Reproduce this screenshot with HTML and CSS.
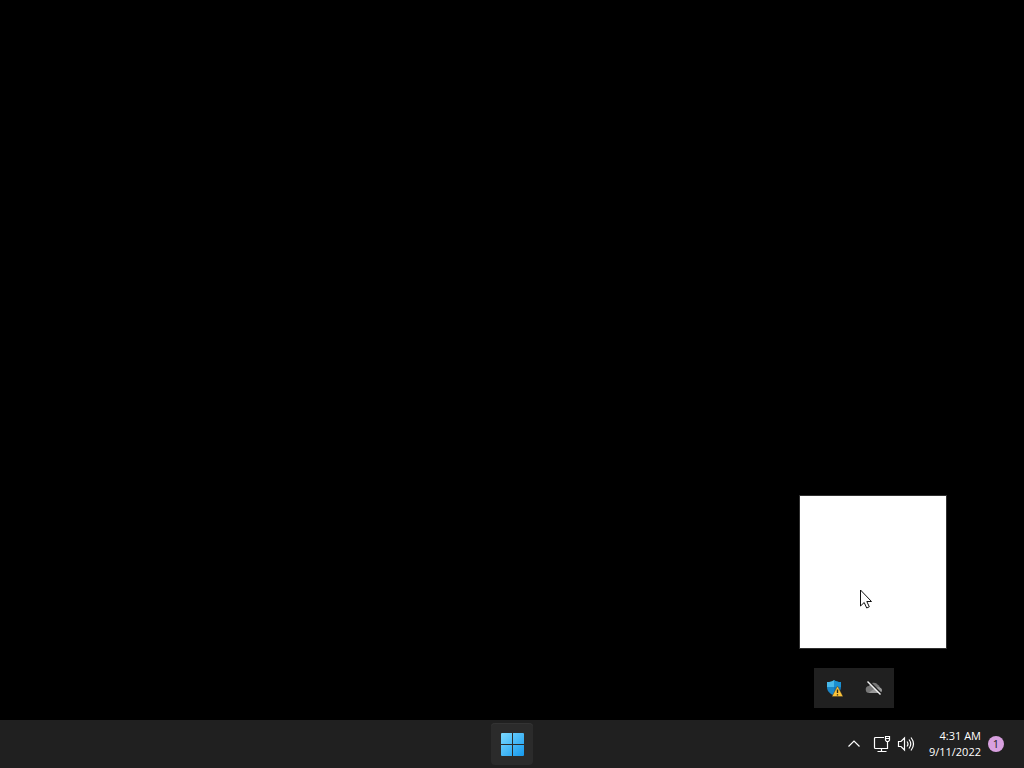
FILE: index.html
```
<!DOCTYPE html>
<html lang="en">

<head>
    <meta charset="UTF-8">
    <meta name="viewport" content="width=device-width, initial-scale=1.0">
    <title>Desktop</title>
    <link rel="stylesheet" href="styles.css">
</head>

<body>
    <main class="desktop">
        <section class="window" aria-label="Window"></section>
        <div class="tray-flyout">
            <button class="flyout-button" aria-label="Windows Security">
                <svg width="18" height="18" viewBox="0 0 18 18">
                    <path d="M9 1c2 1.500 4 2 7 2v5c0 4-2.500 6.500-7 8.500z" fill="#1477b8" />
                    <path d="M9 1C7 2.500 5 3 2 3v5h7z" fill="#48b9ea" />
                    <path d="M9 1c2 1.500 4 2 7 2v5H9z" fill="#1b8fd0" />
                    <path d="M2 8h7v8.500C4.500 14.500 2 12 2 8z" fill="#1b86c7" />
                    <path d="M12.500 7L18 17.500H7z" fill="#fcc43a" stroke="#3a3020" stroke-width=".4" />
                    <path d="M12.500 10.500v3.600M12.500 15.200v1.200" stroke="#2b2412" stroke-width="1.400" />
                </svg>
            </button>
            <button class="flyout-button" aria-label="OneDrive, not signed in">
                <svg width="18" height="18" viewBox="0 0 18 18">
                    <path d="M4.500 14a3.500 3.500 0 0 1-.5-7 5 5 0 0 1 8.500-1.500 4.500 4.500 0 0 1 2.500 3.200 2.800 2.800 0 0 1-.5 5.300z" fill="#777" />
                    <path d="M4 14c2-2.500 5-4 8-5.500 3-1 5 1 5 3a2.700 2.700 0 0 1-2.500 2.500z" fill="#999" />
                    <path d="M4 2.500l12 12" stroke="#202020" stroke-width="2" />
                    <path d="M2.500 2.500l13 13" stroke="#f2f2f2" stroke-width="1.400" />
                </svg>
            </button>
        </div>
        <svg class="cursor" width="14" height="21" viewBox="0 0 14 21">
            <path d="M1.500 1v16l3.700-3.500L7.700 19l2.600-1.200-2.500-5.300h4.700z" fill="#fff" stroke="#111" />
        </svg>
    </main>

    <footer class="taskbar">
        <button class="start-button" aria-label="Start">
            <svg width="24" height="24" viewBox="0 0 24 24">
                <defs>
                    <linearGradient id="startBlue" gradientUnits="userSpaceOnUse" x1="0" y1="0" x2="24" y2="24">
                        <stop offset="0" stop-color="#80dcff" />
                        <stop offset="1" stop-color="#1599ee" />
                    </linearGradient>
                </defs>
                <path d="M2 1h10v11H1V2a1 1 0 0 1 1-1zM13 1h10a1 1 0 0 1 1 1v10H13zM1 13h11v11H2a1 1 0 0 1-1-1zM13 13h11v10a1 1 0 0 1-1 1H13z" fill="url(#startBlue)" />
            </svg>
        </button>
        <div class="tray">
            <button class="tray-button" aria-label="Show hidden icons">
                <svg width="14" height="18" viewBox="0 0 14 18">
                    <path d="M1.500 11.500L7 6l5.500 5.500" />
                </svg>
            </button>
            <button class="tray-button quick-settings" aria-label="Network and volume">
                <svg width="18" height="18" viewBox="0 0 18 18">
                    <path d="M11 2.500H2.500a1 1 0 0 0-1 1v9a1 1 0 0 0 1 1h12v-7M8.500 13.500v3M4.500 16.500h9M12.500 1.500h4v3.500l-1 1.500h-2l-1-1.500zM12.500 3.500h4" />
                </svg>
                <svg width="18" height="18" viewBox="0 0 18 18">
                    <path d="M1.500 6.500H4L7.500 3v12L4 11.500H1.500zM10 6.500q2 2.500 0 5M12 4.500q3.500 4.500 0 9M14 2.500q5 6.500 0 13" />
                </svg>
            </button>
            <button class="tray-button clock">
                <span class="date-time">
                    <time>4:31 AM</time>
                    <time datetime="2022-09-11">9/11/2022</time>
                </span>
                <span class="badge">1</span>
            </button>
        </div>
    </footer>
</body>

</html>
```
FILE: styles.css
```
body {
    margin: 0;
    min-height: 100vh;
    display: flex;
    flex-direction: column;
    background-color: #000;
    font-family: "Open Sans", "Noto Sans", sans-serif;
    font-size: 11px;
    font-weight: 500;
    line-height: 16px;
    color: #fff;
}

button {
    margin: 0;
    padding: 0;
    border: none;
    background: none;
    font: inherit;
    color: inherit;
}

svg {
    display: block;
    fill: none;
}

.desktop {
    flex: 1;
    position: relative;
    overflow: hidden;
}

/* floats over the desktop */
.window {
    position: absolute;
    right: 77px;
    bottom: 71px;
    width: 146px;
    height: 152px;
    background-color: #fff;
    border: 1px solid #303030;
}

.tray-flyout {
    position: absolute;
    right: 130px;
    bottom: 12px;
    display: flex;
    background-color: #202020;
}

.flyout-button {
    width: 40px;
    height: 40px;
    display: flex;
    justify-content: center;
    align-items: center;
}

.cursor {
    position: absolute;
    right: 151px;
    bottom: 110px;
}

.taskbar {
    height: 48px;
    display: grid;
    grid-template-columns: 1fr auto 1fr;
    align-items: center;
    background-color: #202020;
}

.start-button {
    grid-column: 2;
    width: 42px;
    height: 42px;
    display: flex;
    justify-content: center;
    align-items: center;
    background-color: #2b2b2b;
    border-radius: 4px;
    box-shadow: inset 0 1px #333;
}

.tray {
    display: flex;
    justify-content: flex-end;
    align-items: center;
    gap: 12px;
    padding-right: 20px;
}

.tray-button {
    display: flex;
    align-items: center;
}

.tray-button svg {
    stroke: #fff;
    stroke-width: 1.2;
}

.quick-settings {
    gap: 6px;
    padding-right: 2px;
}

.clock {
    gap: 7px;
}

.date-time {
    display: flex;
    flex-direction: column;
    text-align: right;
}

.badge {
    width: 16px;
    height: 16px;
    border-radius: 50%;
    background-color: #d8a0df;
    color: #222;
    text-align: center;
}
```
